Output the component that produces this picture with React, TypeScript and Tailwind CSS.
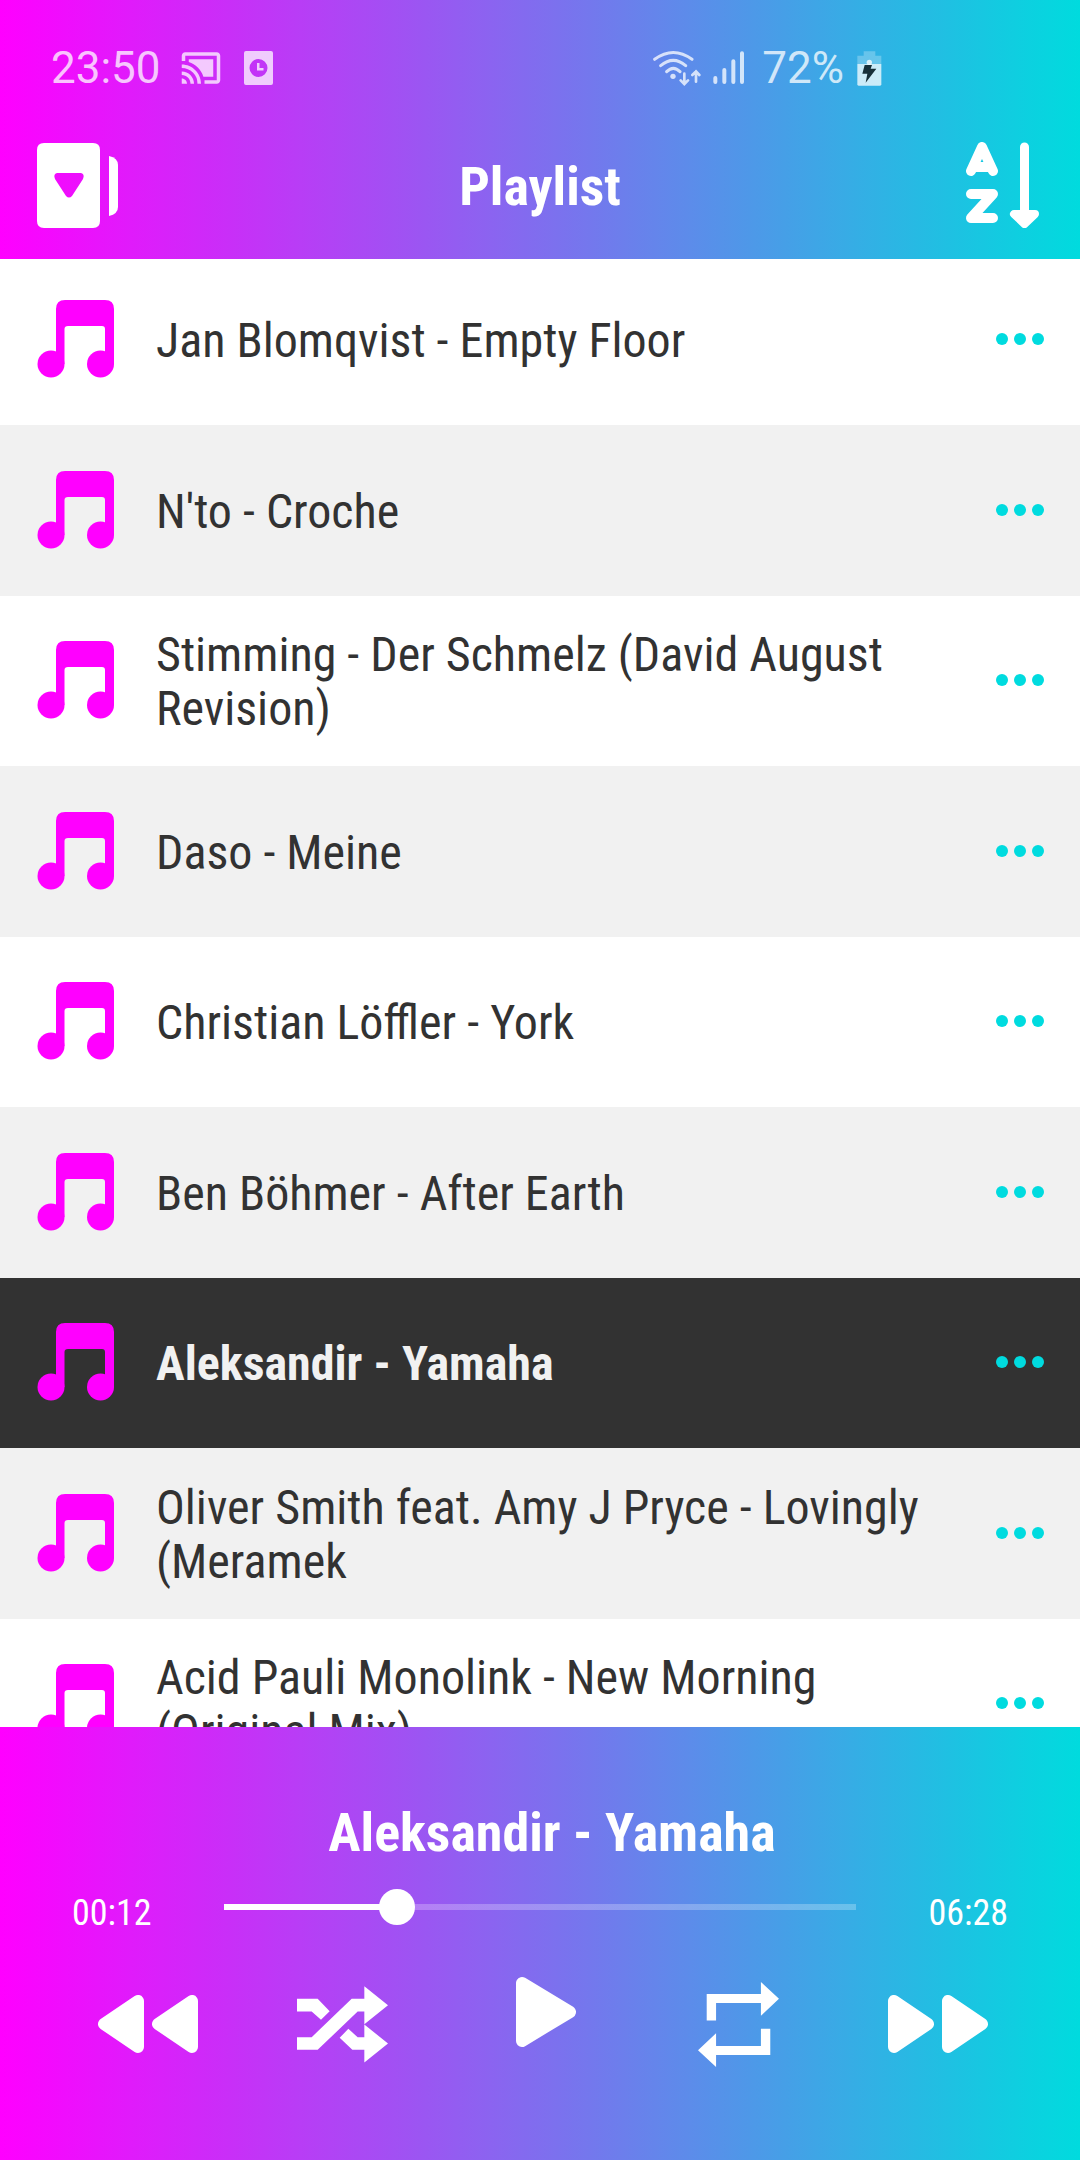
import { useState } from "react";
import { MdCastConnected } from "react-icons/md";

const tracks = [
  "Jan Blomqvist - Empty Floor",
  "N'to - Croche",
  "Stimming - Der Schmelz (David August Revision)",
  "Daso - Meine",
  "Christian Löffler - York",
  "Ben Böhmer - After Earth",
  "Aleksandir - Yamaha",
  "Oliver Smith feat. Amy J Pryce - Lovingly (Meramek",
  "Acid Pauli Monolink - New Morning (Original Mix)",
];

const current = 6;

function StatusBar() {
  return (
    <div className="flex items-center justify-between pl-[51px] pr-[198px] pt-[42px] font-['Roboto'] text-[44px] leading-[52px] text-white/75">
      <div className="flex items-center">
        <span>23:50</span>
        <MdCastConnected className="ml-[19px] size-[42px]" />
        <svg className="ml-[22px] h-[34px] w-[29px]" viewBox="0 0 29 34" fill="currentColor">
          <path
            fillRule="evenodd"
            d="M2 0H27Q29 0 29 2V32Q29 34 27 34H2Q0 34 0 32V2Q0 0 2 0ZM14.500 8A9 9 0 1 0 14.500 26A9 9 0 1 0 14.500 8ZM13 12H15.500V17H19.500V19.500H13Z"
          />
        </svg>
      </div>
      <div className="flex items-center">
        <svg className="h-[36px] w-[48px]" viewBox="37 54 144 108" fill="none" stroke="currentColor" strokeWidth="9" strokeLinecap="round">
          <path d="M42 82Q98 41 154 82M60 101Q98 69 135 101M78 119Q98 99 118 119" />
          <circle cx="97" cy="133" r="8" fill="currentColor" stroke="none" />
          <path d="M131 125V155M120 145L131 156L142 145M166 149V119M155 129L166 118L176 129" strokeWidth="8" />
        </svg>
        <svg className="ml-[12px] h-[34px] w-[32px]" viewBox="217 62 96 102" stroke="currentColor" strokeWidth="12" strokeLinecap="round">
          <path d="M224 143V155M251 119V155M278 93V155M304 69V155" />
        </svg>
        <span className="ml-[17px]">72%</span>
        <svg className="ml-[13px] h-[35px] w-[25px]" viewBox="650 56 75 105" fill="currentColor">
          <path d="M670 57H705V70H723V95H651V70H670Z" opacity="0.35" />
          <path d="M651 95H723V156Q723 160 719 160H655Q651 160 651 156Z" />
          <circle cx="687" cy="90" r="8" />
          <path d="M673 98H695L691 109H708L676 151L681 124H666Z" fill="#17303a" />
        </svg>
      </div>
    </div>
  );
}

function PlaylistsIcon() {
  return (
    <svg className="h-[85px] w-[82px]" viewBox="0 0 82 85" fill="white">
      <path
        fillRule="evenodd"
        d="M7 0H56Q63 0 63 7V78Q63 85 56 85H7Q0 85 0 78V7Q0 0 7 0ZM20 30Q16 31 18 36L29 53Q32 56 35 53L46 36Q48 31 44 30Z"
      />
      <path d="M72 13Q81 15 81 22V64Q81 71 72 73Z" />
    </svg>
  );
}

function SortIcon() {
  return (
    <svg className="h-[86px] w-[79px]" viewBox="-5 0 79 86" fill="none" stroke="white" strokeLinecap="round" strokeLinejoin="round">
      <path d="M5 29L16 5L27 29M9 25H23" strokeWidth="10" />
      <path d="M5 52H27L5 76H27" strokeWidth="10" />
      <path d="M58.500 5V72" strokeWidth="9" />
      <path d="M48 72H69L58.500 82Z" fill="white" strokeWidth="8" />
    </svg>
  );
}

function NoteIcon() {
  return (
    <svg className="h-[78px] w-[78px] shrink-0" viewBox="0 0 78 78" fill="#ff00ff">
      <path d="M19 64V9Q19 0 28 0H68Q77 0 77 9V64H68V29Q68 26 65 26H31Q27.500 26 27.500 29V64Z" />
      <circle cx="14" cy="64" r="13.500" />
      <circle cx="63.500" cy="64" r="13.500" />
    </svg>
  );
}

function SeekIcon({ back = false }: { back?: boolean }) {
  return (
    <svg className="h-[60px] w-[102px]" viewBox="0 0 102 60" fill="white" stroke="white" strokeWidth="12" strokeLinejoin="round">
      {back ? (
        <path d="M41 7V53L7 30ZM95 7V53L61 30Z" />
      ) : (
        <path d="M7 7V53L41 30ZM61 7V53L95 30Z" />
      )}
    </svg>
  );
}

export default function App() {
  const [position, setPosition] = useState(26);

  return (
    <div className="flex h-screen flex-col overflow-hidden bg-white font-['Roboto_Condensed','Roboto',sans-serif] text-[48px] leading-[54px] text-[#323232]">
      <header className="z-10 shrink-0 bg-linear-to-r/srgb from-[#ff00ff] to-[#00dbde] pb-[31px] text-white">
        <StatusBar />
        <div className="mt-[48px] flex items-center justify-between pl-[37px] pr-[40px]">
          <button aria-label="Playlists">
            <PlaylistsIcon />
          </button>
          <h1 className="pt-[4px] text-[54px] leading-[60px] font-bold">Playlist</h1>
          <button aria-label="Sort by name">
            <SortIcon />
          </button>
        </div>
      </header>

      <ul className="-mt-1 min-h-0 flex-1 overflow-hidden">
        {tracks.map((track, i) => (
          <li
            key={track}
            className={
              "flex h-[170px] items-center pb-[2px] pl-[37px] pr-[36px] even:h-[171px] " +
              (i === current ? "bg-[#323232] font-bold text-[#f1f1f1]" : "even:bg-[#f1f1f1]")
            }
          >
            <NoteIcon />
            <span className="ml-[41px] min-w-0 flex-1 pt-[4px] pr-[40px]">{track}</span>
            <button aria-label={"Options for " + track}>
              <svg className="h-[12px] w-[48px]" viewBox="0 0 48 12" fill="#00dbdf">
                <circle cx="6" cy="6" r="6" />
                <circle cx="24" cy="6" r="6" />
                <circle cx="42" cy="6" r="6" />
              </svg>
            </button>
          </li>
        ))}
      </ul>

      <footer className="z-10 shrink-0 bg-linear-to-r/srgb from-[#ff00ff] to-[#00dbde] pt-[76px] pb-[88px] text-white">
        <h2 className="pl-[24px] text-center text-[54px] leading-[60px] font-bold">{tracks[current]}</h2>
        <div className="mt-[18px] flex items-center px-[72px] text-[36px] leading-[40px]">
          <span className="w-[152px] pt-[12px]">00:12</span>
          <input
            type="range"
            aria-label="Position"
            min={0}
            max={100}
            value={position}
            onChange={(e) => setPosition(Number(e.target.value))}
            className="h-[36px] min-w-0 flex-1 appearance-none bg-transparent bg-[length:100%_6px] bg-center bg-no-repeat [&::-webkit-slider-thumb]:size-[36px] [&::-webkit-slider-thumb]:appearance-none [&::-webkit-slider-thumb]:rounded-full [&::-webkit-slider-thumb]:bg-white"
            style={{
              backgroundImage: `linear-gradient(to right, white ${position}%, rgba(255,255,255,0.25) ${position}%)`,
            }}
          />
          <span className="w-[152px] pt-[12px] text-right">06:28</span>
        </div>
        <div className="mt-[43px] grid h-[96px] grid-cols-5 items-center justify-items-center pl-[49px] pr-[43px]">
          <button aria-label="Previous">
            <SeekIcon back />
          </button>
          <button aria-label="Shuffle">
            <svg className="h-[77px] w-[97px]" viewBox="651 106 291 230" fill="white">
              <path d="M651 144H713L749 181L723 207L695 182H651ZM651 259H695L815 144H853V106L924 163L853 220V182H833L713 297H651ZM805 234L833 259H853V221L924 278L853 335V297H817L779 261Z" />
            </svg>
          </button>
          <button aria-label="Play">
            <svg className="h-[96px] w-[66px]" viewBox="-3 0 66 96" fill="white" stroke="white" strokeWidth="12" strokeLinejoin="round">
              <path d="M9 7V65L57 36Z" />
            </svg>
          </button>
          <button aria-label="Repeat">
            <svg className="h-[85px] w-[85px]" viewBox="413 94 254 254" fill="white">
              <path d="M439 130H601V94L655 144L601 195V157H467V209H439ZM629 234V312H467V348L413 298L467 247V285H601V234Z" />
            </svg>
          </button>
          <button aria-label="Next">
            <SeekIcon />
          </button>
        </div>
      </footer>
    </div>
  );
}
